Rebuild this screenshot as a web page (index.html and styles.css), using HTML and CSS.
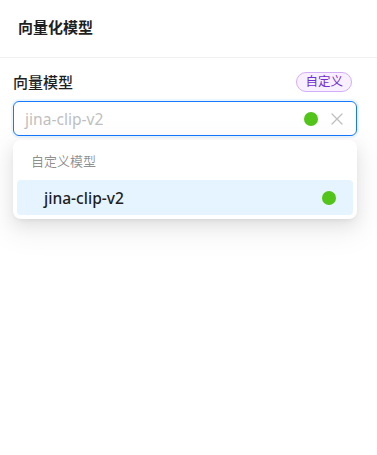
FILE: index.html
```html
<!DOCTYPE html>
<html lang="zh">
<head>
<meta charset="utf-8">
<link rel="stylesheet" href="styles.css">
</head>
<body>
<div class="panel">
  <div class="header"><span class="title">向量化模型</span></div>
  <div class="content">
    <div class="label-row">
      <span class="label">向量模型</span>
      <span class="tag">自定义</span>
    </div>
    <div class="select-wrap">
      <div class="select">
        <span class="placeholder">jina-clip-v2</span>
        <span class="dot"></span>
        <svg class="clear" width="12" height="12" viewBox="0 0 12 12"><path d="M1 1L11 11M11 1L1 11" stroke="#bfbfbf" stroke-width="1.3" fill="none" stroke-linecap="round"/></svg>
      </div>
      <div class="dropdown">
        <div class="group-title">自定义模型</div>
        <div class="option">
          <span class="option-text">jina-clip-v2</span>
          <span class="dot"></span>
        </div>
      </div>
    </div>
  </div>
</div>
</body>
</html>
```
FILE: styles.css
```css
* { box-sizing: border-box; }
html, body { margin: 0; padding: 0; background: #fff; }
body {
  font-family: "Noto Sans", "Noto Sans CJK SC", sans-serif;
  color: rgba(0,0,0,0.88);
  width: 377px;
  height: 455px;
  overflow: hidden;
}
.header {
  height: 58px;
  padding: 0 18px;
  display: flex;
  align-items: center;
  border-bottom: 1px solid #f0f0f0;
}
.title {
  font-size: 15px;
  font-weight: 700;
  color: #1f1f1f;
  margin-top: -4px;
}
.content {
  padding: 13px 20px 0 13px;
}
.label-row {
  display: flex;
  align-items: center;
  justify-content: space-between;
  height: 21px;
  margin-bottom: 9px;
}
.label {
  font-size: 15px;
  font-weight: 500;
  color: #1f1f1f;
}
.tag {
  font-size: 12.5px;
  line-height: 18px;
  height: 20px;
  padding: 0 8px;
  border: 1px solid #d3adf7;
  background: #f9f0ff;
  color: #722ed1;
  border-radius: 10px;
  margin-right: 5px;
}
.select-wrap {
  position: relative;
  width: 344px;
}
.select {
  height: 35px;
  border: 1px solid #1677ff;
  border-radius: 6px;
  box-shadow: 0 0 0 2px rgba(5,145,255,0.08);
  display: flex;
  align-items: center;
  padding: 0 13px 0 11px;
}
.placeholder {
  flex: 1;
  font-size: 15.6px;
  color: #bfbfbf;
}
.dot {
  width: 14px;
  height: 14px;
  border-radius: 50%;
  background: #52c41a;
  flex: none;
}
.clear {
  margin-left: 13px;
  flex: none;
}
.dropdown {
  position: absolute;
  left: 0;
  top: 39px;
  width: 344px;
  background: #fff;
  border-radius: 8px;
  padding: 4px;
  box-shadow: 0 6px 16px 0 rgba(0,0,0,0.08), 0 3px 6px -4px rgba(0,0,0,0.12), 0 9px 28px 8px rgba(0,0,0,0.05);
}
.group-title {
  height: 36px;
  display: flex;
  align-items: center;
  padding-left: 14px;
  padding-bottom: 4px;
  font-size: 13px;
  color: rgba(0,0,0,0.45);
}
.option {
  height: 35px;
  background: #e6f4ff;
  border-radius: 4px;
  display: flex;
  align-items: center;
  padding: 0 17px 0 27px;
}
.option-text {
  flex: 1;
  font-size: 15.6px;
  font-weight: 500;
  color: #1f1f1f;
}
```
